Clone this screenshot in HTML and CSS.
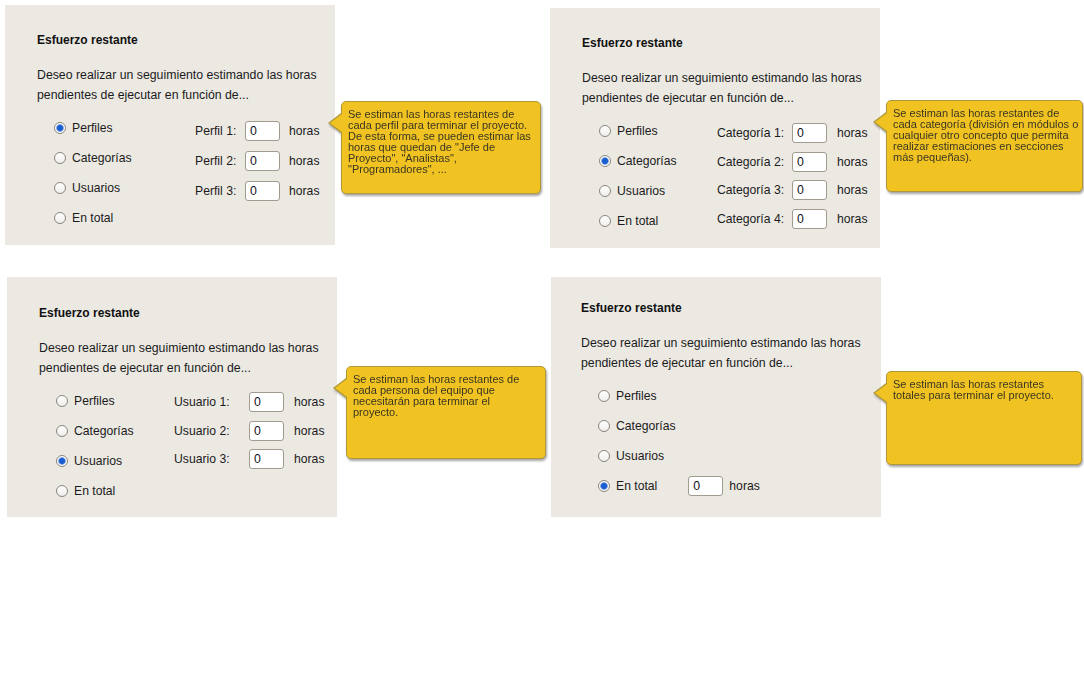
FILE: index.html
```html
<!DOCTYPE html>
<html lang="es">
<head>
<meta charset="utf-8">
<title>Esfuerzo restante</title>
<link rel="stylesheet" href="styles.css">
</head>
<body>
<main class="sheet">
  <section class="fig fig-1">
    <div class="panel">
      <h2 class="title">Esfuerzo restante</h2>
      <p class="intro">Deseo realizar un seguimiento estimando las horas<br>pendientes de ejecutar en función de...</p>
      <div class="body">
        <div class="options">
          <label class="opt"><input type="radio" name="m1" checked><span>Perfiles</span></label>
          <label class="opt"><input type="radio" name="m1"><span>Categorías</span></label>
          <label class="opt"><input type="radio" name="m1"><span>Usuarios</span></label>
          <label class="opt"><input type="radio" name="m1"><span>En total</span></label>
        </div>
        <div class="entries">
          <span class="e-label">Perfil 1:</span><input class="num" type="text" value="0"><span class="unit">horas</span>
          <span class="e-label">Perfil 2:</span><input class="num" type="text" value="0"><span class="unit">horas</span>
          <span class="e-label">Perfil 3:</span><input class="num" type="text" value="0"><span class="unit">horas</span>
        </div>
      </div>
    </div>
    <div class="tip">Se estiman las horas restantes de<br>cada perfil para terminar el proyecto.<br>De esta forma, se pueden estimar las<br>horas que quedan de "Jefe de<br>Proyecto", "Analistas",<br>"Programadores", ...</div>
  </section>

  <section class="fig fig-2">
    <div class="panel">
      <h2 class="title">Esfuerzo restante</h2>
      <p class="intro">Deseo realizar un seguimiento estimando las horas<br>pendientes de ejecutar en función de...</p>
      <div class="body">
        <div class="options">
          <label class="opt"><input type="radio" name="m2"><span>Perfiles</span></label>
          <label class="opt"><input type="radio" name="m2" checked><span>Categorías</span></label>
          <label class="opt"><input type="radio" name="m2"><span>Usuarios</span></label>
          <label class="opt"><input type="radio" name="m2"><span>En total</span></label>
        </div>
        <div class="entries">
          <span class="e-label">Categoría 1:</span><input class="num" type="text" value="0"><span class="unit">horas</span>
          <span class="e-label">Categoría 2:</span><input class="num" type="text" value="0"><span class="unit">horas</span>
          <span class="e-label">Categoría 3:</span><input class="num" type="text" value="0"><span class="unit">horas</span>
          <span class="e-label">Categoría 4:</span><input class="num" type="text" value="0"><span class="unit">horas</span>
        </div>
      </div>
    </div>
    <div class="tip">Se estiman las horas restantes de<br>cada categoría (división en módulos o<br>cualquier otro concepto que permita<br>realizar estimaciones en secciones<br>más pequeñas).</div>
  </section>

  <section class="fig fig-3">
    <div class="panel">
      <h2 class="title">Esfuerzo restante</h2>
      <p class="intro">Deseo realizar un seguimiento estimando las horas<br>pendientes de ejecutar en función de...</p>
      <div class="body">
        <div class="options">
          <label class="opt"><input type="radio" name="m3"><span>Perfiles</span></label>
          <label class="opt"><input type="radio" name="m3"><span>Categorías</span></label>
          <label class="opt"><input type="radio" name="m3" checked><span>Usuarios</span></label>
          <label class="opt"><input type="radio" name="m3"><span>En total</span></label>
        </div>
        <div class="entries">
          <span class="e-label">Usuario 1:</span><input class="num" type="text" value="0"><span class="unit">horas</span>
          <span class="e-label">Usuario 2:</span><input class="num" type="text" value="0"><span class="unit">horas</span>
          <span class="e-label">Usuario 3:</span><input class="num" type="text" value="0"><span class="unit">horas</span>
        </div>
      </div>
    </div>
    <div class="tip">Se estiman las horas restantes de<br>cada persona del equipo que<br>necesitarán para terminar el<br>proyecto.</div>
  </section>

  <section class="fig fig-4">
    <div class="panel">
      <h2 class="title">Esfuerzo restante</h2>
      <p class="intro">Deseo realizar un seguimiento estimando las horas<br>pendientes de ejecutar en función de...</p>
      <div class="body">
        <div class="options">
          <label class="opt"><input type="radio" name="m4"><span>Perfiles</span></label>
          <label class="opt"><input type="radio" name="m4"><span>Categorías</span></label>
          <label class="opt"><input type="radio" name="m4"><span>Usuarios</span></label>
          <div class="opt"><input type="radio" name="m4" checked><span>En total</span><input class="num total-num" type="text" value="0"><span class="total-unit">horas</span></div>
        </div>
      </div>
    </div>
    <div class="tip">Se estiman las horas restantes<br>totales para terminar el proyecto.</div>
  </section>
</main>
</body>
</html>
```

FILE: styles.css
```css
* { box-sizing: border-box; }

html, body {
  margin: 0;
  background: #ffffff;
}

body {
  font-family: "Liberation Sans", Arial, sans-serif;
  color: #1b1b1b;
}

.sheet {
  display: grid;
  grid-template-columns: 545px 539px;
  grid-template-rows: 272px 404px;
  width: 1084px;
  height: 676px;
  overflow: hidden;
}

.fig {
  display: flex;
  align-items: flex-start;
}

.fig-1 {
  padding: 5px 0 0 5px;
  --opt-w: 141px;
  --lab-w: 50px;
  --unit-gap: 9px;
  --row-h: 30px;
  --ent-top: 2.5px;
  --tip-gap: 6px;
  --tip-top: 96px;
  --tip-w: 200px;
  --tip-h: 93px;
  --pad-top: 28px;
  --pad-left: 32px;
}

.fig-2 {
  padding: 8px 0 0 5px;
  --opt-w: 118px;
  --lab-w: 75px;
  --unit-gap: 10px;
  --row-h: 28.5px;
  --ent-top: 3px;
  --tip-gap: 6px;
  --tip-top: 92px;
  --tip-w: 197px;
  --tip-h: 92px;
  --pad-top: 28px;
  --pad-left: 32px;
}

.fig-3 {
  padding: 5px 0 0 7px;
  --opt-w: 118px;
  --lab-w: 75px;
  --unit-gap: 10px;
  --row-h: 28.5px;
  --ent-top: 2px;
  --tip-gap: 9px;
  --tip-top: 89px;
  --tip-w: 200px;
  --tip-h: 93px;
  --pad-top: 29px;
  --pad-left: 32px;
}

.fig-4 {
  padding: 5px 0 0 6px;
  --opt-w: 200px;
  --tip-gap: 5px;
  --tip-top: 94px;
  --tip-w: 196px;
  --tip-h: 94px;
  --pad-top: 24px;
  --pad-left: 30px;
}

.panel {
  flex: none;
  width: 330px;
  height: 240px;
  background: #ece9e3;
  padding: var(--pad-top) 0 0 var(--pad-left);
}

.title {
  margin: 0;
  font-size: 12px;
  font-weight: bold;
  line-height: 15px;
  color: #111111;
}

.intro {
  margin: 17px 0 0;
  font-size: 12.3px;
  line-height: 20px;
}

.body {
  display: flex;
  align-items: flex-start;
  margin: 8px 0 0 17px;
}

.options {
  flex: none;
  width: var(--opt-w);
  display: flex;
  flex-direction: column;
}

.opt {
  height: 30px;
  display: flex;
  align-items: center;
  font-size: 12.2px;
  white-space: nowrap;
}

.opt input[type="radio"] {
  appearance: none;
  -webkit-appearance: none;
  flex: none;
  width: 12px;
  height: 12px;
  margin: 0 6px 0 0;
  border: 1px solid #8a857d;
  border-radius: 50%;
  background: linear-gradient(#ffffff, #efeeec);
}

.opt input[type="radio"]:checked {
  background: radial-gradient(circle, #1a5ed2 0, #1a5ed2 2.6px, #6f9be0 3.3px, #ffffff 4.3px);
}

.entries {
  display: grid;
  grid-template-columns: var(--lab-w) 35px auto;
  grid-auto-rows: var(--row-h);
  align-items: center;
  margin-top: var(--ent-top);
  font-size: 12.2px;
  white-space: nowrap;
}

.num {
  width: 35px;
  height: 20px;
  margin: 0;
  border: 1px solid #a19b90;
  border-radius: 3px;
  padding: 0 0 0 4px;
  font: 12.3px "Liberation Sans", Arial, sans-serif;
  color: #111122;
  background: #ffffff;
}

.unit {
  margin-left: var(--unit-gap);
}

.total-num {
  margin-left: 31px;
}

.total-unit {
  margin-left: 6px;
}

.tip {
  position: relative;
  flex: none;
  width: var(--tip-w);
  height: var(--tip-h);
  margin: var(--tip-top) 0 0 var(--tip-gap);
  background: #f1c322;
  border: 1px solid #b09838;
  border-radius: 5px;
  padding: 7px 4px 0 6px;
  font-size: 11px;
  line-height: 11.1px;
  color: #3a3622;
  white-space: nowrap;
  filter: drop-shadow(1px 2px 1px rgba(0, 0, 0, 0.35));
}

.tip::before {
  content: "";
  position: absolute;
  left: -14px;
  top: 11px;
  border-style: solid;
  border-width: 10px 13px 10px 0;
  border-color: transparent #b09838 transparent transparent;
}

.tip::after {
  content: "";
  position: absolute;
  left: -12px;
  top: 12px;
  border-style: solid;
  border-width: 9px 12px 9px 0;
  border-color: transparent #f1c322 transparent transparent;
}
```
